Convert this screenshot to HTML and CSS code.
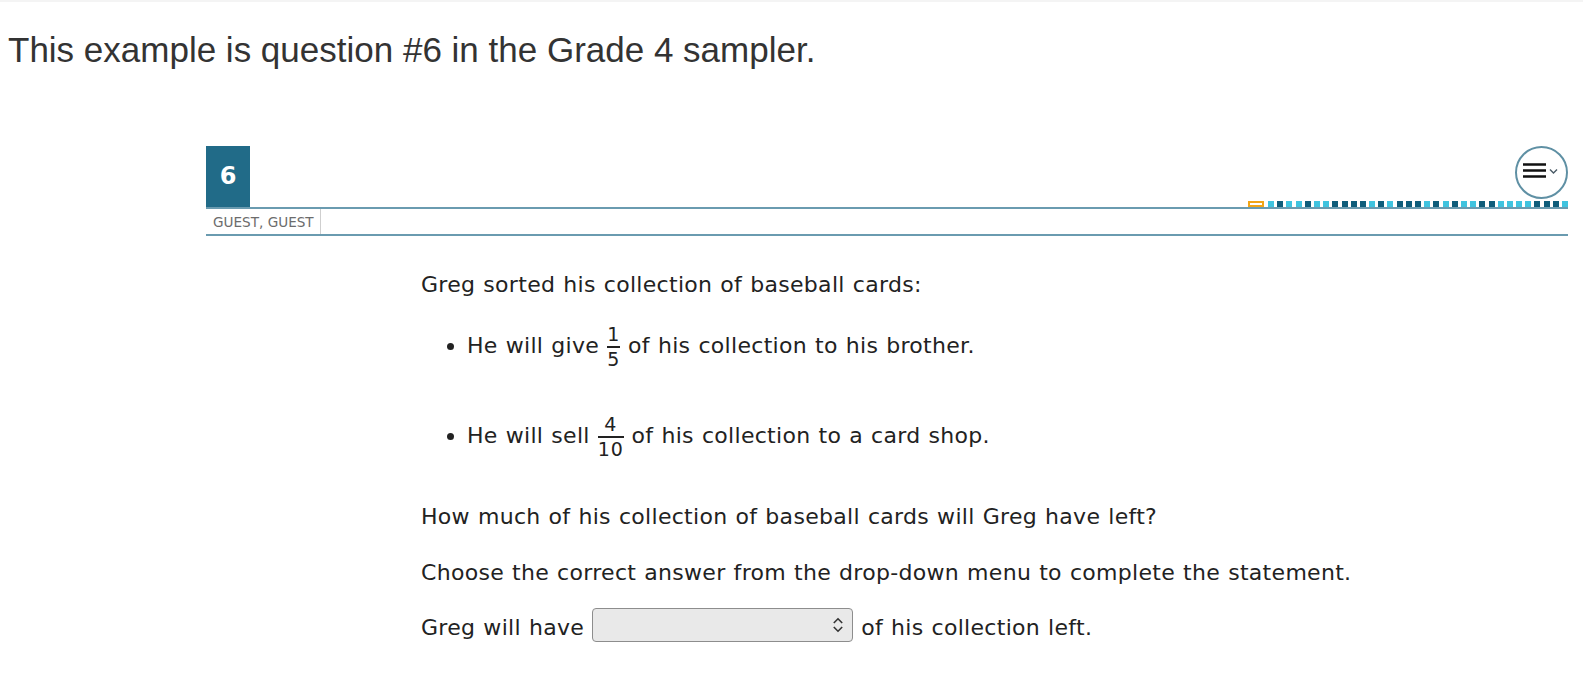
FILE: index.html
```html
<!DOCTYPE html>
<html lang="en">
<head>
  <meta charset="UTF-8" />
  <title>Grade 4 sampler - question 6</title>
  <link rel="stylesheet" href="styles.css">
</head>
<body>
  <h1 class="intro">This example is question #6 in the Grade 4 sampler.</h1>

  <section class="item">
    <div class="item-head">
      <div class="item-number">6</div>
      <div class="item-tools">
        <button class="menu-btn" aria-label="Options">
          <svg width="53" height="53" viewBox="0 0 53 53">
            <path d="M8 18.5h23M8 24.5h23M8 30.5h23" stroke="#111" stroke-width="2.6" fill="none"/>
            <path d="M35 23.5l3.5 3.5 3.5-3.5" stroke="#4a5a66" stroke-width="1.4" fill="none"/>
          </svg>
        </button>
        <div class="progress">
          <span class="current"></span>
          <span class="sq"></span><span class="sq dk"></span><span class="sq"></span><span class="sq"></span><span class="sq dk"></span>
          <span class="sq"></span><span class="sq"></span><span class="sq dk"></span><span class="sq dk"></span><span class="sq dk"></span>
          <span class="sq dk"></span><span class="sq"></span><span class="sq dk"></span><span class="sq"></span><span class="sq dk"></span>
          <span class="sq dk"></span><span class="sq dk"></span><span class="sq"></span><span class="sq dk"></span><span class="sq"></span>
          <span class="sq dk"></span><span class="sq"></span><span class="sq"></span><span class="sq dk"></span><span class="sq dk"></span>
          <span class="sq"></span><span class="sq"></span><span class="sq"></span><span class="sq"></span><span class="sq dk"></span>
          <span class="sq dk"></span><span class="sq dk"></span><span class="sq"></span>
        </div>
      </div>
    </div>
    <div class="item-user">
      <span class="user-name">GUEST, GUEST</span>
    </div>

    <div class="item-body">
      <p class="stem">Greg sorted his collection of baseball cards:</p>
      <ul class="facts">
        <li>He will give <span class="frac"><span class="num">1</span><span class="den">5</span></span> of his collection to his brother.</li>
        <li>He will sell <span class="frac"><span class="num">4</span><span class="den">10</span></span> of his collection to a card shop.</li>
      </ul>
      <p class="question">How much of his collection of baseball cards will Greg have left?</p>
      <p class="direction">Choose the correct answer from the drop-down menu to complete the statement.</p>
      <p class="answer">Greg will have
        <span class="select-wrap">
          <select class="choice" aria-label="Answer">
            <option></option>
          </select>
          <svg class="select-icon" width="12" height="18" viewBox="0 0 12 18">
            <path d="M1.8 7l4.2-4.2 4.2 4.2M1.8 11l4.2 4.2 4.2-4.2" stroke="#333" stroke-width="1.6" fill="none"/>
          </svg>
        </span>
        of his collection left.</p>
    </div>
  </section>
</body>
</html>
```

FILE: styles.css
```css
body {
  margin: 0;
  background: white;
  color: #222;
  font-family: "DejaVu Sans", Verdana, sans-serif;
  border-top: 2px solid #f4f4f4;
}

.intro {
  font-family: "Liberation Sans", Arial, sans-serif;
  font-size: 35px;
  font-weight: normal;
  color: #333;
  margin: 0;
  padding: 28px 8px 0;
  line-height: 40px;
}

.item {
  margin: 76px 15px 0 206px;
}

.item-head {
  display: flex;
  justify-content: space-between;
  align-items: stretch;
  border-bottom: 2px solid #6a9bb0;
}

.item-number {
  width: 44px;
  height: 61px;
  background: #216b88;
  color: white;
  font-weight: bold;
  font-size: 24px;
  display: flex;
  align-items: center;
  justify-content: center;
  padding-bottom: 2px;
  box-sizing: border-box;
}

.item-tools {
  display: flex;
  flex-direction: column;
  align-items: flex-end;
  justify-content: space-between;
}

.menu-btn {
  width: 53px;
  height: 53px;
  padding: 0;
  border: 2px solid #5f90a4;
  border-radius: 50%;
  background: white;
  display: flex;
  align-items: center;
  justify-content: center;
  overflow: hidden;
}

.menu-btn svg {
  flex: none;
}

.progress {
  display: flex;
  gap: 3.2px;
  height: 6px;
  align-items: flex-end;
}

.progress .current {
  width: 12px;
  height: 2px;
  border: 2px solid #f2a516;
  margin-right: 1px;
}

.progress .sq {
  width: 6px;
  height: 6px;
  background: #3fc3df;
}

.progress .sq.dk {
  background: #0e5d7b;
}

.item-user {
  display: flex;
  height: 25px;
  border-bottom: 2px solid #6a9bb0;
}

.user-name {
  width: 107px;
  padding-left: 7px;
  border-right: 1px solid #cfcfcf;
  font-size: 13.6px;
  line-height: 26px;
  color: #6c6c6c;
}

.item-body {
  padding-left: 215px;
  font-size: 22px;
  line-height: 26px;
  letter-spacing: 0.3px;
  word-spacing: 0.75px;
}

.item-body p {
  margin: 0;
}

.stem {
  padding-top: 36px;
}

.facts {
  margin: 25px 0 0;
  padding-left: 46px;
}

.facts li + li {
  margin-top: 43px;
}

.frac {
  display: inline-flex;
  flex-direction: column;
  align-items: center;
  vertical-align: middle;
  font-size: 19px;
  line-height: 22.5px;
  letter-spacing: 0.8px;
}

.frac .num {
  align-self: stretch;
  text-align: center;
  border-bottom: 2px solid #222;
}

.facts + .question {
  margin-top: 44px;
}

.direction {
  margin-top: 30px !important;
}

.answer {
  margin-top: 22px !important;
}

.select-wrap {
  position: relative;
  display: inline-block;
  overflow: hidden;
  vertical-align: -7px;
}

.choice {
  appearance: none;
  width: 261px;
  height: 34px;
  background: #e9e9e9;
  border: 1px solid #8d8d8d;
  border-radius: 4px;
  display: block;
}

.select-icon {
  position: absolute;
  right: 9px;
  top: 8px;
}
```
